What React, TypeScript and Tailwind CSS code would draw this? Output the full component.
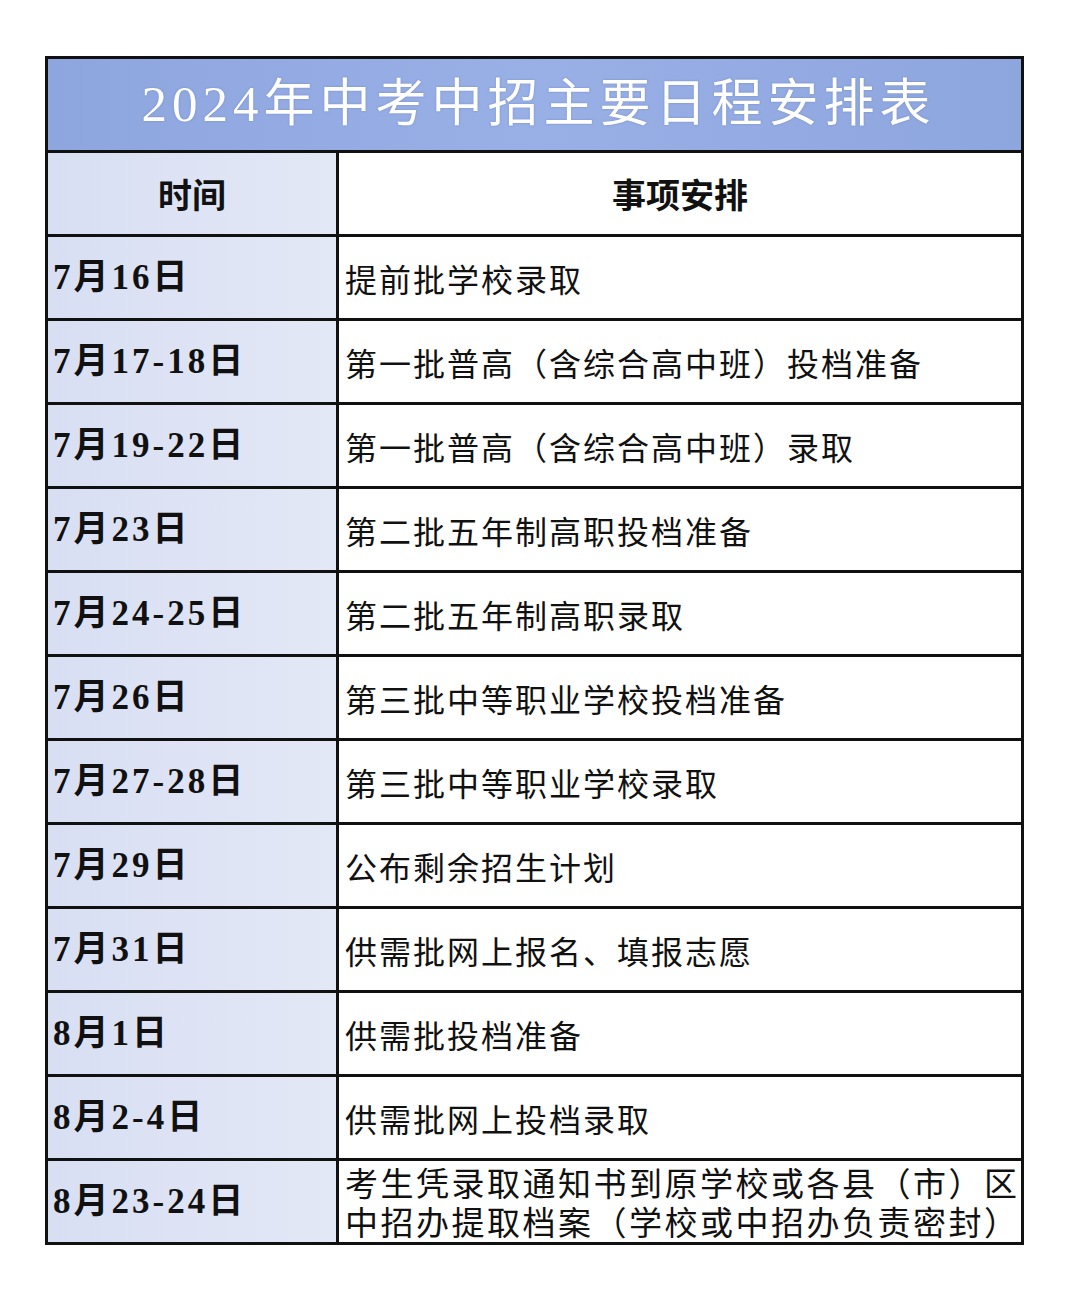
const rows: [string, string[]][] = [
  ["7月16日", ["提前批学校录取"]],
  ["7月17-18日", ["第一批普高（含综合高中班）投档准备"]],
  ["7月19-22日", ["第一批普高（含综合高中班）录取"]],
  ["7月23日", ["第二批五年制高职投档准备"]],
  ["7月24-25日", ["第二批五年制高职录取"]],
  ["7月26日", ["第三批中等职业学校投档准备"]],
  ["7月27-28日", ["第三批中等职业学校录取"]],
  ["7月29日", ["公布剩余招生计划"]],
  ["7月31日", ["供需批网上报名、填报志愿"]],
  ["8月1日", ["供需批投档准备"]],
  ["8月2-4日", ["供需批网上投档录取"]],
  ["8月23-24日", ["考生凭录取通知书到原学校或各县（市）区", "中招办提取档案（学校或中招办负责密封）"]],
]

const serif = "font-['Liberation_Serif','Noto_Sans_CJK_SC',serif]"

export default function App() {
  return (
    <div className="min-h-[1309px] bg-white pt-[56px] pl-[45px]">
      <div className="w-[979px] border-[3px] border-[#111]">
        {/* title */}
        <div className="flex h-[91px] items-center justify-center bg-gradient-to-r from-[#8ea6de] via-[#98b0e6] to-[#8ea6de]">
          <h1
            className={`${serif} text-[51px] leading-none tracking-[5px] text-white pl-[8px] [text-shadow:0_0_2px_rgba(80,100,160,0.5)]`}
          >
            2024年中考中招主要日程安排表
          </h1>
        </div>

        {/* header */}
        <div className="grid grid-cols-[291px_1fr] h-[84px] border-t-[3px] border-[#111]">
          <div className="flex items-center justify-center bg-gradient-to-r from-[#d8dff3] to-[#e3e8f6] border-r-[3px] border-[#111]">
            <span className="font-['Noto_Sans_CJK_SC',sans-serif] font-bold text-[34px] text-[#111]">时间</span>
          </div>
          <div className="flex items-center justify-center bg-white">
            <span className="font-['Noto_Sans_CJK_SC',sans-serif] font-bold text-[34px] text-[#111]">事项安排</span>
          </div>
        </div>

        {rows.map(([date, lines]) => {
          const two = lines.length > 1
          return (
            <div key={date} className="grid grid-cols-[291px_1fr] h-[84px] border-t-[3px] border-[#111]">
              <div className="flex items-center bg-gradient-to-r from-[#d8dff3] to-[#e3e8f6] border-r-[3px] border-[#111] pl-[5px]">
                <span className={`${serif} font-bold text-[35px] tracking-[3px] text-[#111] leading-none`}>{date}</span>
              </div>
              <div className="flex flex-col justify-center bg-white pl-[6px]">
                {lines.map((l) => (
                  <span
                    key={l}
                    className={
                      two
                        ? "font-['Noto_Sans_CJK_SC',sans-serif] text-[33px] tracking-[2.5px] text-[#111] leading-[39px] whitespace-nowrap"
                        : "font-['Noto_Sans_CJK_SC',sans-serif] text-[32px] tracking-[2px] text-[#111] leading-[40px] whitespace-nowrap"
                    }
                  >
                    {l}
                  </span>
                ))}
              </div>
            </div>
          )
        })}
      </div>
    </div>
  )
}
